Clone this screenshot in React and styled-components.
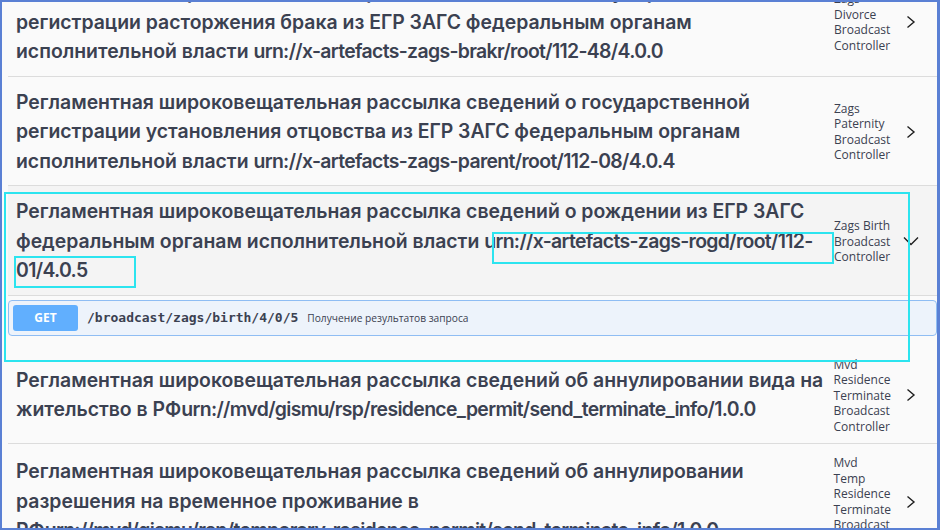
import React from 'react'
import styled, { createGlobalStyle } from 'styled-components'

const GlobalStyle = createGlobalStyle`
  html, body {
    margin: 0;
    padding: 0;
    background: #ffffff;
  }
`

const Frame = styled.div`
  position: relative;
  width: 940px;
  height: 530px;
  box-sizing: border-box;
  border: 2px solid #5a80d4;
  border-right-width: 3px;
  background: #fafafa;
  overflow: hidden;
`

const Viewport = styled.div`
  padding: 0 0 0 6px;
  margin-top: ${props => -props.$scroll}px;
`

const Section = styled.div``

const TagHeader = styled.div`
  display: flex;
  align-items: center;
  padding: 11px 16px 9px 8px;
  border-bottom: 1px solid #dcdcdc;
  background: ${props => (props.$open ? '#f4f4f4' : 'transparent')};
`

const Title = styled.h3`
  flex: 1;
  min-width: 0;
  margin: 0;
  font-family: Inter, 'Noto Sans', sans-serif;
  font-weight: 600;
  font-size: 19.4px;
  line-height: 29.5px;
  color: #3b4151;
`

const Urn = styled.span`
  letter-spacing: -0.65px;
`

const TagName = styled.small`
  flex: 0 0 57px;
  margin-left: 4px;
  font-family: 'Open Sans', sans-serif;
  font-size: 12px;
  line-height: 15.5px;
  color: #3b4151;
`

const ExpandButton = styled.button`
  flex: 0 0 20px;
  width: 20px;
  height: 20px;
  margin-left: 10px;
  padding: 0;
  border: none;
  background: none;
  display: flex;
  align-items: center;
  justify-content: center;
`

const Content = styled.div`
  padding: 4px 0 10px;
`

const Opblock = styled.div`
  display: flex;
  align-items: center;
  padding: 4px;
  border: 1px solid #8fbdf3;
  border-radius: 4px;
  background: #edf3fb;
`

const Method = styled.span`
  flex: 0 0 65px;
  height: 26px;
  border-radius: 3px;
  background: #61affe;
  color: #ffffff;
  font-family: 'Open Sans', sans-serif;
  font-weight: 700;
  font-size: 12px;
  display: flex;
  align-items: center;
  justify-content: center;
`

const Path = styled.span`
  margin-left: 9px;
  font-family: 'DejaVu Sans Mono', monospace;
  font-weight: 600;
  font-size: 13px;
  color: #3b4151;
`

const Summary = styled.span`
  margin-left: 9px;
  font-family: 'Open Sans', sans-serif;
  font-size: 10.2px;
  color: #3b4151;
`

const Highlight = styled.div`
  position: absolute;
  box-sizing: border-box;
  border: 2px solid #2ce4ef;
  pointer-events: none;
`

const Chevron = ({ open }) => (
  <svg width="20" height="20" viewBox="0 0 20 20" fill="none">
    {open ? (
      <polyline points="3,6.5 10,13.5 17,6.5" stroke="#1f1f1f" strokeWidth="1.4" />
    ) : (
      <polyline points="6.5,4.5 13,10 6.5,15.5" stroke="#1f1f1f" strokeWidth="1.4" />
    )}
  </svg>
)

const tags = [
  {
    title: 'Регламентная широковещательная рассылка сведений о государственной регистрации расторжения брака из ЕГР ЗАГС федеральным органам исполнительной власти ',
    urn: 'urn://x-artefacts-zags-brakr/root/112-48/4.0.0',
    name: 'Zags Divorce Broadcast Controller'
  },
  {
    title: 'Регламентная широковещательная рассылка сведений о государственной регистрации установления отцовства из ЕГР ЗАГС федеральным органам исполнительной власти ',
    urn: 'urn://x-artefacts-zags-parent/root/112-08/4.0.4',
    name: 'Zags Paternity Broadcast Controller'
  },
  {
    title: 'Регламентная широковещательная рассылка сведений о рождении из ЕГР ЗАГС федеральным органам исполнительной власти ',
    urn: 'urn://x-artefacts-zags-rogd/root/112-01/4.0.5',
    name: 'Zags Birth Broadcast Controller',
    open: true,
    ops: [{ method: 'GET', path: '/broadcast/zags/birth/4/0/5', summary: 'Получение результатов запроса' }]
  },
  {
    title: 'Регламентная широковещательная рассылка сведений об аннулировании вида на жительство в РФ',
    urn: 'urn://mvd/gismu/rsp/residence_permit/send_terminate_info/1.0.0',
    name: 'Mvd Residence Terminate Broadcast Controller'
  },
  {
    title: 'Регламентная широковещательная рассылка сведений об аннулировании разрешения на временное проживание в РФ',
    urn: 'urn://mvd/gismu/rsp/temporary_residence_permit/send_terminate_info/1.0.0',
    name: 'Mvd Temp Residence Terminate Broadcast Controller'
  }
]

const highlights = [
  { left: 2, top: 190, width: 906, height: 170 },
  { left: 12, top: 254, width: 122, height: 32 },
  { left: 490, top: 230, width: 342, height: 32 }
]

const App = () => (
  <>
    <GlobalStyle />
    <Frame>
      <Viewport $scroll={35}>
        {tags.map(tag => (
          <Section key={tag.name}>
            <TagHeader $open={tag.open}>
              <Title>
                {tag.title}
                <Urn>{tag.urn}</Urn>
              </Title>
              <TagName>{tag.name}</TagName>
              <ExpandButton>
                <Chevron open={tag.open} />
              </ExpandButton>
            </TagHeader>
            {tag.open && (
              <Content>
                {tag.ops.map(op => (
                  <Opblock key={op.path}>
                    <Method>{op.method}</Method>
                    <Path>{op.path}</Path>
                    <Summary>{op.summary}</Summary>
                  </Opblock>
                ))}
              </Content>
            )}
          </Section>
        ))}
      </Viewport>
      {highlights.map((h, i) => (
        <Highlight key={i} style={h} />
      ))}
    </Frame>
  </>
)

export default App
